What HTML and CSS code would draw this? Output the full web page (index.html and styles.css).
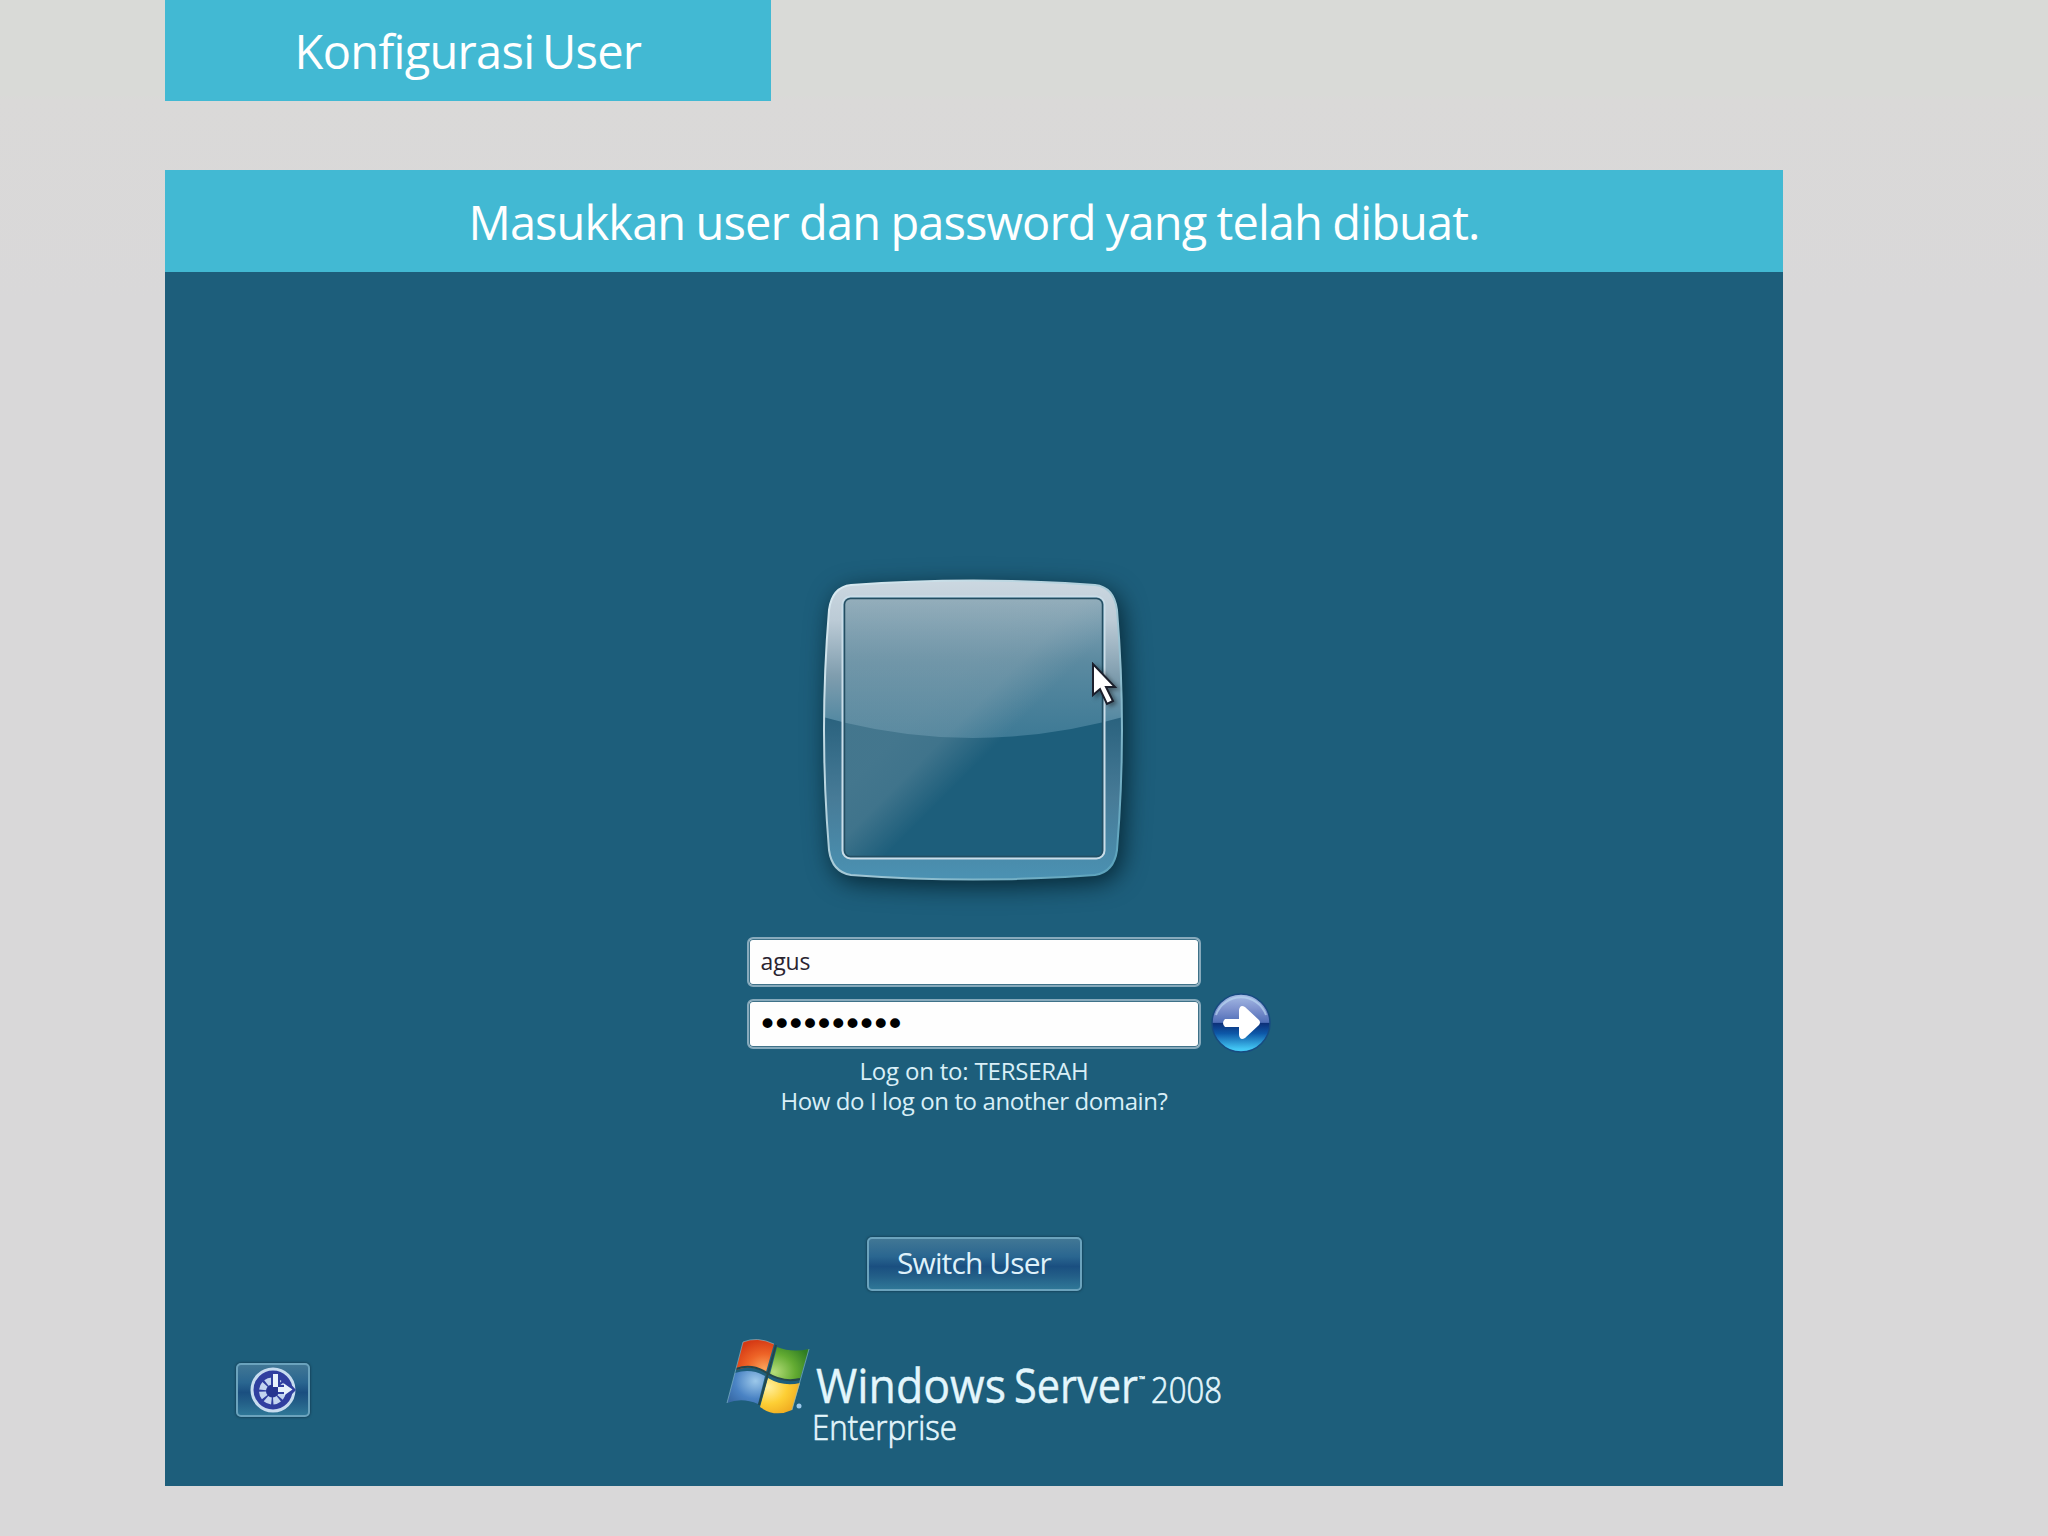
FILE: index.html
```html
<!DOCTYPE html>
<html lang="id">
<head>
    <meta charset="UTF-8">
    <title>Konfigurasi User</title>
    <link rel="stylesheet" href="styles.css">
</head>
<body>
    <h1 class="title"><span>Konfigurasi User</span></h1>

    <div class="panel">
        <h2 class="caption"><span>Masukkan user dan password yang telah dibuat.</span></h2>

        <div class="screen">
            <!-- user picture frame -->
            <div class="avatar">
                <svg class="frame" width="300" height="300" viewBox="0 0 300 300">
                    <defs>
                        <linearGradient id="frameLow" gradientUnits="userSpaceOnUse" x1="0" y1="137" x2="0" y2="300">
                            <stop offset="0" stop-color="#2a627e"/>
                            <stop offset="0.5" stop-color="#477b97"/>
                            <stop offset="1" stop-color="#4b92b3"/>
                        </linearGradient>
                        <linearGradient id="frameTop" gradientUnits="userSpaceOnUse" x1="0" y1="0" x2="0" y2="160">
                            <stop offset="0" stop-color="#ccd8e1"/>
                            <stop offset="0.25" stop-color="#bccbd6"/>
                            <stop offset="0.6" stop-color="#7f9dae"/>
                            <stop offset="0.88" stop-color="#5489a2"/>
                        </linearGradient>
                        <linearGradient id="rim" x1="0" y1="0" x2="1" y2="1">
                            <stop offset="0" stop-color="#dcebf2"/>
                            <stop offset="0.5" stop-color="#a9cbd8"/>
                            <stop offset="1" stop-color="#56a0ba"/>
                        </linearGradient>
                        <linearGradient id="gloss" x1="0" y1="0" x2="0" y2="1">
                            <stop offset="0" stop-color="#c8d4dc" stop-opacity="0.66"/>
                            <stop offset="0.45" stop-color="#a6bfcd" stop-opacity="0.46"/>
                            <stop offset="1" stop-color="#7db0c8" stop-opacity="0.34"/>
                        </linearGradient>
                        <linearGradient id="sheen" gradientUnits="userSpaceOnUse" x1="120" y1="110" x2="174" y2="164">
                            <stop offset="0" stop-color="#a7b5bd" stop-opacity="0.28"/>
                            <stop offset="0.45" stop-color="#a7b5bd" stop-opacity="0.25"/>
                            <stop offset="1" stop-color="#a7b5bd" stop-opacity="0"/>
                        </linearGradient>
                        <path id="shape" d="M28 5Q150 -4 272 5Q291 7 294 30Q304 150 294 270Q291 292 272 295Q150 304 28 295Q9 292 6 270Q-4 150 6 30Q9 7 28 5Z"/>
                        <clipPath id="outer"><use href="#shape"/></clipPath>
                        <clipPath id="glass"><rect x="21" y="18" width="259" height="259" rx="6"/></clipPath>
                    </defs>
                    <use href="#shape" fill="url(#frameLow)"/>
                    <path d="M0 0H300V137Q150 179 0 137Z" clip-path="url(#outer)" fill="url(#frameTop)"/>
                    <use href="#shape" fill="none" stroke="url(#rim)" stroke-width="2"/>
                    <rect x="20" y="17" width="261" height="261" rx="7" fill="#1d5e7b"/>
                    <g clip-path="url(#glass)">
                        <path d="M0 17H300V137Q150 179 0 137Z" fill="url(#gloss)"/>
                        <rect x="20" y="17" width="261" height="261" fill="url(#sheen)"/>
                    </g>
                    <rect x="21.5" y="18.5" width="258" height="258" rx="6" fill="none" stroke="#244e62" stroke-width="1.5"/>
                    <rect x="19.5" y="16.5" width="262" height="262" rx="8" fill="none" stroke="#cbdde8" stroke-width="2"/>
                </svg>
                <svg class="cursor" width="26" height="44" viewBox="0 0 26 44">
                    <path d="M1 2V33L8 27L15 42L21 39L14 25H23Z" fill="#fff" stroke="#1b1f2c" stroke-width="2"/>
                </svg>
            </div>

            <div class="login">
                <div class="field name"><span>agus</span></div>
                <div class="field password"><span>••••••••••</span></div>
                <svg class="go" width="60" height="60" viewBox="0 0 60 60">
                    <defs>
                        <linearGradient id="ball" x1="0" y1="0" x2="0" y2="1">
                            <stop offset="0" stop-color="#a7bde6"/>
                            <stop offset="0.25" stop-color="#8094cf"/>
                            <stop offset="0.49" stop-color="#506fb8"/>
                            <stop offset="0.5" stop-color="#0c2f78"/>
                            <stop offset="0.68" stop-color="#0d58a8"/>
                            <stop offset="0.95" stop-color="#43c8f5"/>
                        </linearGradient>
                    </defs>
                    <circle cx="30" cy="30" r="29" fill="url(#ball)" stroke="#174b80" stroke-width="1.5"/>
                    <path d="M5 22A26.5 26.5 0 0 1 55 22" fill="none" stroke="#b6d4ef" stroke-width="2" stroke-opacity="0.7"/>
                    <path d="M14 26H28V17Q29 11 34 14L48 27Q50 29.500 48 32L34 45Q29 48 28 42V34H14Q10 30 14 26Z" fill="#fff"/>
                </svg>
            </div>

            <p class="domain">
                <span class="log-on">Log on to: TERSERAH</span>
                <span class="help">How do I log on to another domain?</span>
            </p>

            <div class="button switch"><span>Switch User</span></div>

            <div class="bottom">
                <div class="button access">
                    <svg width="48" height="48" viewBox="0 0 48 48">
                        <circle cx="24" cy="24" r="21" fill="#303f9f" stroke="#c7dcef" stroke-width="3"/>
                        <circle cx="23.500" cy="25" r="10" fill="none" stroke="#c3d5ef" stroke-width="7" stroke-dasharray="6 1.850" stroke-dashoffset="-1"/>
                        <path d="M22 6H31V19H38V14L47 24L38 33V28H22Z" fill="#303f9f"/>
                        <circle cx="23.500" cy="25" r="6" fill="#26358f"/>
                        <path d="M26.500 8V21" fill="none" stroke="#e8f2fb" stroke-width="5"/>
                        <path d="M29 21H35V17.500L43.500 23.500L35 29.500V26H29Z" fill="#e8f2fb"/>
                    </svg>
                </div>
                <svg class="logo" width="500" height="120" viewBox="0 0 500 120">
                    <defs>
                        <radialGradient id="red" cx="0.75" cy="0.9" r="0.9">
                            <stop offset="0" stop-color="#fba35a"/>
                            <stop offset="0.5" stop-color="#ee6427"/>
                            <stop offset="1" stop-color="#d63a14"/>
                        </radialGradient>
                        <radialGradient id="green" cx="0.1" cy="0.75" r="1">
                            <stop offset="0" stop-color="#b5dd7a"/>
                            <stop offset="0.55" stop-color="#63ab32"/>
                            <stop offset="1" stop-color="#2f7d23"/>
                        </radialGradient>
                        <radialGradient id="blue" cx="0.75" cy="0.3" r="0.9">
                            <stop offset="0" stop-color="#9cc8ea"/>
                            <stop offset="0.6" stop-color="#4a83c4"/>
                            <stop offset="1" stop-color="#3769a5"/>
                        </radialGradient>
                        <radialGradient id="yellow" cx="0.2" cy="0.25" r="0.95">
                            <stop offset="0" stop-color="#fff0a0"/>
                            <stop offset="0.5" stop-color="#fdcf35"/>
                            <stop offset="1" stop-color="#eda31c"/>
                        </radialGradient>
                    </defs>
                    <!-- flag -->
                    <path d="M17 6Q31 0 48 8L40 36Q25 28 10 34Z" fill="url(#red)"/>
                    <path d="M51 11Q66 17 83 13L74 43Q58 47 44 38Z" fill="url(#green)"/>
                    <path d="M9 37Q25 32 39 40L32 68Q16 61 1 67Z" fill="url(#blue)"/>
                    <path d="M42 42Q57 51 74 47L66 74Q49 82 34 71Z" fill="url(#yellow)"/>
                    <path d="M10 33Q26 27 41 37Q57 47 74 43M50 9L33 69" fill="none" stroke="#24474c" stroke-width="2"/>
                    <path d="M83 13L66 74M1 67L17 6Q31 0 48 8" fill="none" stroke="#8cc0d0" stroke-width="1" stroke-opacity="0.6"/>
                    <circle cx="73" cy="70" r="2.500" fill="#9cc8ea"/>
                    <g class="brand">
                        <text x="90" y="66.500" font-size="48" textLength="190" lengthAdjust="spacingAndGlyphs">Windows</text>
                        <text x="288" y="66.500" font-size="48" textLength="124" lengthAdjust="spacingAndGlyphs">Server</text>
                        <text x="413" y="46" font-size="8">™</text>
                        <text class="thin" x="425" y="66.500" font-size="37" textLength="71" lengthAdjust="spacingAndGlyphs">2008</text>
                        <text class="thin" x="86" y="104" font-size="35" textLength="145" lengthAdjust="spacingAndGlyphs">Enterprise</text>
                    </g>
                </svg>
            </div>
        </div>
    </div>
</body>
</html>
```
FILE: styles.css
```css
* {
    box-sizing: border-box;
}

body {
    margin: 0;
    height: 1536px;
    padding-left: 165px;
    overflow: hidden;
    background: linear-gradient(#d9dad7, #d9dad7 94px, #dad9d8 100px, #d9d8d9 300px);
    font-family: "Open Sans", "Noto Sans", sans-serif;
}

h1, h2, p {
    margin: 0;
    font-weight: normal;
}

.title, .caption {
    display: flex;
    justify-content: center;
    background-color: #42b9d3;
    color: #fff;
    font-size: 47px;
    white-space: nowrap;
}

.title {
    width: 606px;
    height: 101px;
    line-height: 103px;
    letter-spacing: -0.7px;
    word-spacing: -4px;
}

.panel {
    width: 1618px;
    margin-top: 69px;
}

.caption {
    height: 102px;
    line-height: 105px;
    letter-spacing: -0.9px;
    word-spacing: -1px;
}

/* logon screen */
.screen {
    display: flex;
    flex-direction: column;
    align-items: center;
    height: 1214px;
    padding-top: 308px;
    background-color: #1d5e7b;
}

.avatar {
    position: relative;
    width: 300px;
    height: 300px;
    margin-right: 3px;
}

.frame {
    display: block;
    overflow: visible;
    filter: drop-shadow(4px 6px 12px rgba(0, 25, 35, 0.8));
}

.cursor {
    position: absolute;
    left: 269px;
    top: 82px;
    filter: drop-shadow(3px 2px 2px rgba(0, 0, 0, 0.4));
}

.login {
    display: grid;
    grid-template-columns: 60px 454px 60px;
    grid-template-rows: 50px 50px;
    column-gap: 10px;
    row-gap: 12px;
    margin-top: 57px;
    margin-right: 1px;
}

.field {
    grid-column: 2;
    display: flex;
    align-items: center;
    padding-left: 12px;
    border: 2px solid #87aabc;
    border-radius: 6px;
    background-color: #fefefe;
    box-shadow: inset 0 0 0 1px #3f7289;
    color: #2a2430;
    font-size: 23px;
}

.name span {
    letter-spacing: -0.1px;
    line-height: 40px;
    margin-bottom: 3px;
}

.password span {
    font-family: "DejaVu Sans", sans-serif;
    font-size: 34px;
    line-height: 46px;
    letter-spacing: -5.9px;
    margin-left: -3px;
    color: #000;
}

.go {
    grid-column: 3;
    grid-row: 2;
    margin-top: -6px;
}

.domain {
    display: flex;
    flex-direction: column;
    align-items: center;
    margin-top: 7px;
    color: #d9eff7;
    font-size: 24px;
    line-height: 30px;
    white-space: nowrap;
}

.log-on {
    letter-spacing: -0.2px;
}

.help {
    letter-spacing: -0.4px;
}

.button {
    display: flex;
    align-items: center;
    justify-content: center;
    height: 54px;
    border: 2px solid #6ba3bd;
    border-radius: 5px;
    background: linear-gradient(#417795, #2a6690 35%, #1a4f80 55%, #235f88 75%, #2f7797);
    box-shadow: 0 0 2px 1px #17475f;
}

.switch {
    width: 215px;
    margin-top: 121px;
    padding-bottom: 3px;
    color: #dff1fa;
    font-size: 30px;
    letter-spacing: -0.9px;
    white-space: nowrap;
}

.bottom {
    display: grid;
    grid-template-columns: 1fr 500px 1fr;
    width: 100%;
    margin-top: 45px;
    padding-left: 73px;
    padding-right: 69px;
}

.access {
    width: 74px;
    margin-top: 27px;
    margin-left: -2px;
}

.logo {
    display: block;
    overflow: visible;
}

.brand {
    fill: #e3f6fc;
    stroke: #e3f6fc;
    stroke-width: 0.4px;
}

.thin {
    font-weight: 300;
    stroke-width: 0.7px;
}
```
